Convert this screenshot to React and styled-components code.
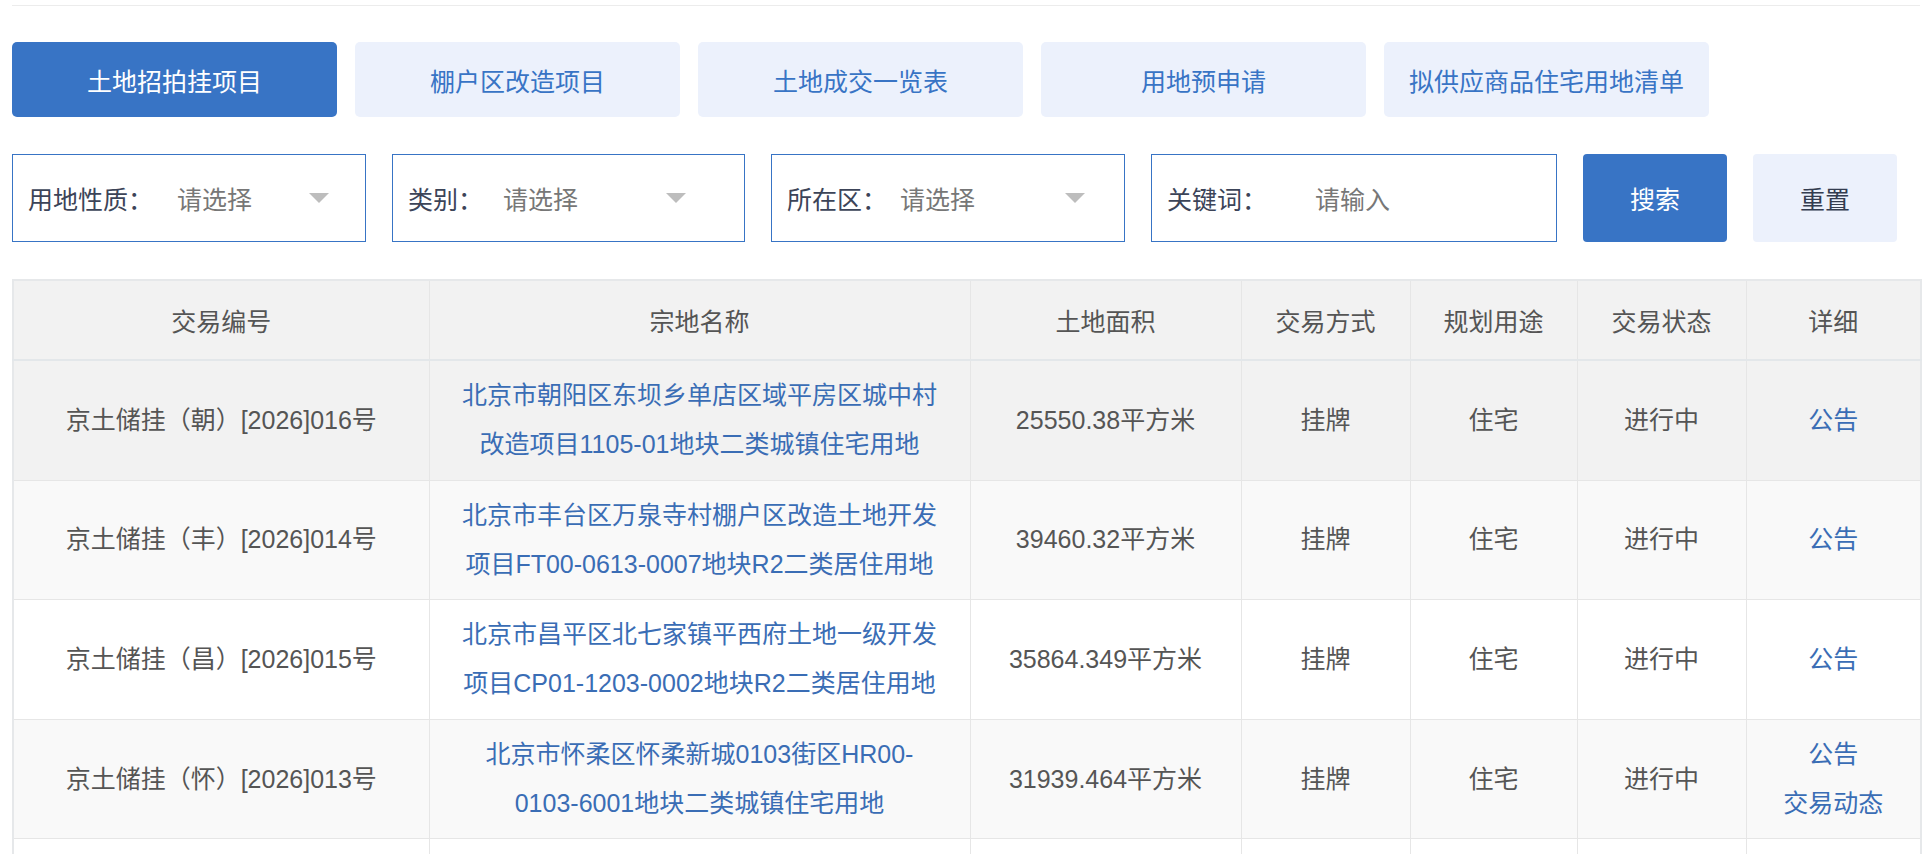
import React from 'react';
import styled, { createGlobalStyle } from 'styled-components';

const GlobalStyle = createGlobalStyle`
  html, body {
    margin: 0;
    padding: 0;
    background: #fff;
    overflow: hidden;
  }
  body {
    font-family: "Liberation Sans", "Noto Sans CJK SC", sans-serif;
  }
`;

const Page = styled.div`
  padding: 0 8px 0 12px;
`;

const TopRule = styled.div`
  height: 5px;
  border-bottom: 1px solid #ececec;
`;

const TabBar = styled.div`
  display: flex;
  gap: 18px;
  margin-top: 36px;
`;

const Tab = styled.div`
  width: 325px;
  height: 75px;
  border-radius: 5px;
  display: flex;
  align-items: center;
  justify-content: center;
  font-size: 25px;
  background: ${p => (p.$active ? '#3874c5' : '#ecf1fc')};
  color: ${p => (p.$active ? '#fff' : '#3874c5')};
  cursor: pointer;
`;

const FilterRow = styled.div`
  display: flex;
  gap: 26px;
  margin-top: 37px;
`;

const FilterBox = styled.div`
  width: ${p => p.$width}px;
  height: 88px;
  box-sizing: border-box;
  border: 1px solid #3874c5;
  display: flex;
  align-items: center;
  padding-left: 15px;
  font-size: 25px;
`;

const FilterLabel = styled.span`
  width: ${p => p.$width}px;
  flex-shrink: 0;
  color: #3c4458;
`;

const FilterValue = styled.span`
  width: ${p => p.$width || 200}px;
  flex-shrink: 0;
  color: #777;
`;

const Arrow = styled.span`
  width: 0;
  height: 0;
  border-left: 10px solid transparent;
  border-right: 10px solid transparent;
  border-top: 10px solid #bdbdbd;
`;

const ActionButton = styled.button`
  width: 144px;
  height: 88px;
  border: none;
  border-radius: 4px;
  font-family: inherit;
  font-size: 25px;
  background: ${p => (p.$primary ? '#3874c5' : '#ecf1fc')};
  color: ${p => (p.$primary ? '#fff' : '#333c50')};
  cursor: pointer;
`;

const Table = styled.table`
  margin-top: 37px;
  width: 1908px;
  border-collapse: collapse;
  table-layout: fixed;
  border: 2px solid #e6e8ea;
  font-size: 25px;
`;

const HeadCell = styled.th`
  height: 78px;
  padding: 0;
  background: #f2f2f2;
  color: #555;
  font-weight: normal;
  border-right: 1px solid #e6e6e6;
  border-bottom: 2px solid #e3e7ea;
`;

const Row = styled.tr`
  background: ${p => (p.$hover ? '#f2f2f2' : '#fff')};
  &:nth-child(even) {
    background: ${p => (p.$hover ? '#f2f2f2' : '#f9f9f9')};
  }
`;

const Cell = styled.td`
  height: 118.6px;
  padding: 0 ${p => p.$pad || 8}px;
  text-align: center;
  vertical-align: middle;
  line-height: 49px;
  color: #555;
  border: 1px solid #e6e6e6;
`;

const Link = styled.a`
  display: block;
  color: #3a6db5;
  text-decoration: none;
`;

const tabs = ['土地招拍挂项目', '棚户区改造项目', '土地成交一览表', '用地预申请', '拟供应商品住宅用地清单'];

const filters = [
  { label: '用地性质：', box: 354, labelWidth: 149, valueWidth: 132, value: '请选择', arrow: true },
  { label: '类别：', box: 353, labelWidth: 95, valueWidth: 163, value: '请选择', arrow: true },
  { label: '所在区：', box: 354, labelWidth: 113, valueWidth: 165, value: '请选择', arrow: true },
  { label: '关键词：', box: 406, labelWidth: 148, valueWidth: 200, value: '请输入', arrow: false }
];

const columns = [
  { title: '交易编号', width: 416 },
  { title: '宗地名称', width: 541 },
  { title: '土地面积', width: 271 },
  { title: '交易方式', width: 169 },
  { title: '规划用途', width: 167 },
  { title: '交易状态', width: 169 },
  { title: '详细', width: 175 }
];

const rows = [
  {
    code: '京土储挂（朝）[2026]016号',
    name: '北京市朝阳区东坝乡单店区域平房区城中村改造项目1105-01地块二类城镇住宅用地',
    area: '25550.38平方米',
    links: ['公告'],
    hover: true
  },
  {
    code: '京土储挂（丰）[2026]014号',
    name: '北京市丰台区万泉寺村棚户区改造土地开发项目FT00-0613-0007地块R2二类居住用地',
    area: '39460.32平方米',
    links: ['公告']
  },
  {
    code: '京土储挂（昌）[2026]015号',
    name: '北京市昌平区北七家镇平西府土地一级开发项目CP01-1203-0002地块R2二类居住用地',
    area: '35864.349平方米',
    links: ['公告']
  },
  {
    code: '京土储挂（怀）[2026]013号',
    name: '北京市怀柔区怀柔新城0103街区HR00-0103-6001地块二类城镇住宅用地',
    area: '31939.464平方米',
    links: ['公告', '交易动态']
  }
];

export default function App() {
  return (
    <Page>
      <GlobalStyle />
      <TopRule />
      <TabBar>
        {tabs.map((t, i) => (
          <Tab key={t} $active={i === 0}>{t}</Tab>
        ))}
      </TabBar>
      <FilterRow>
        {filters.map(f => (
          <FilterBox key={f.label} $width={f.box}>
            <FilterLabel $width={f.labelWidth}>{f.label}</FilterLabel>
            <FilterValue $width={f.valueWidth}>{f.value}</FilterValue>
            {f.arrow && <Arrow />}
          </FilterBox>
        ))}
        <ActionButton $primary>搜索</ActionButton>
        <ActionButton>重置</ActionButton>
      </FilterRow>
      <Table>
        <colgroup>
          {columns.map(c => (
            <col key={c.title} style={{ width: c.width }} />
          ))}
        </colgroup>
        <thead>
          <tr>
            {columns.map(c => (
              <HeadCell key={c.title}>{c.title}</HeadCell>
            ))}
          </tr>
        </thead>
        <tbody>
          {rows.map(r => (
            <Row key={r.code} $hover={r.hover}>
              <Cell>{r.code}</Cell>
              <Cell $pad={28}>
                <Link href="#">{r.name}</Link>
              </Cell>
              <Cell>{r.area}</Cell>
              <Cell>挂牌</Cell>
              <Cell>住宅</Cell>
              <Cell>进行中</Cell>
              <Cell>
                {r.links.map(l => (
                  <Link key={l} href="#">{l}</Link>
                ))}
              </Cell>
            </Row>
          ))}
          <Row>
            {columns.map(c => (
              <Cell key={c.title} />
            ))}
          </Row>
        </tbody>
      </Table>
    </Page>
  );
}
